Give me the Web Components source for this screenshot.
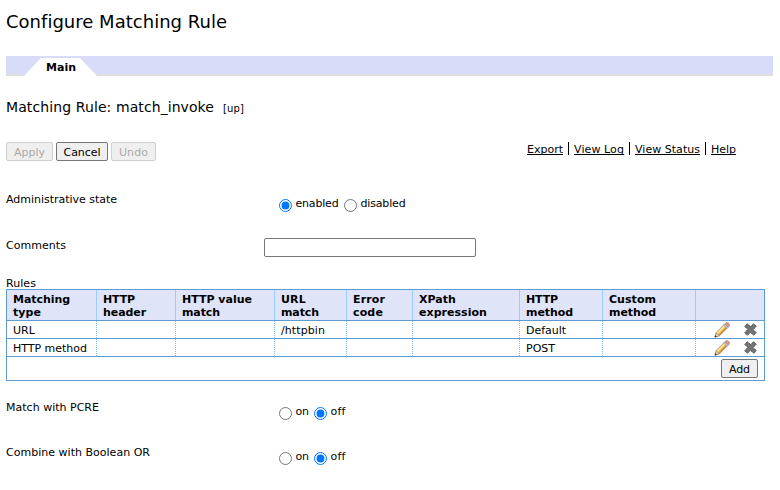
<!DOCTYPE html>
<html lang="en"><head><meta charset="utf-8"><title>Configure Matching Rule</title>
<style>
html,body{margin:0;background:#fff}
body{font:11px/13px "DejaVu Sans",Verdana,sans-serif;color:#000;width:780px;height:490px;overflow:hidden}
</style></head><body>
<config-page></config-page>
<script>
const define=(name,html,setup)=>customElements.define(name,class extends HTMLElement{
  connectedCallback(){
    if(this.shadowRoot)return;
    const root=this.attachShadow({mode:'open'});
    const t=document.createElement('template');
    t.innerHTML=html;
    root.append(t.content.cloneNode(true));
    if(setup)setup(this,root);
  }
});

// A single text line whose tracking is adjusted to a given advance width.
define('text-line','<style>:host{display:inline-block;white-space:pre;flex:none}span{display:inline-block;text-decoration:inherit}</style><span></span>',(el,root)=>{
  const s=root.querySelector('span'),text=el.getAttribute('text'),w=+el.getAttribute('w');
  s.textContent=text;
  if(w){
    const natural=s.getBoundingClientRect().width;
    const gap=(w-natural)/text.length;
    s.style.letterSpacing=gap+'px';
    el.style.width=w+'px';
  }
});

define('tab-bar',`<style>
:host{display:flex;width:767px;height:20px;box-sizing:border-box;background:linear-gradient(#d8dcf9 0 18px,#dedede 18px);padding:2px 0 0 18px}
.tab{width:73px;height:18px;background:#fff;clip-path:polygon(17px 0,56px 0,73px 18px,0 18px);display:flex;padding:3px 0 0 22px;box-sizing:border-box;font-weight:bold}
</style><div class="tab"><slot></slot></div>`);

define('push-button',`<style>
:host{display:block;flex:none}
button{display:flex;align-items:center;justify-content:center;box-sizing:border-box;width:100%;height:19px;margin:0;padding:2px 0 0;border:1px solid #767676;border-radius:2px;background:#efefef;color:#000;font:inherit}
button:disabled{border-color:#d0d0d0;background:#efefef;color:#aaa}
</style><button><slot></slot></button>`,(el,root)=>{root.querySelector('button').disabled=el.hasAttribute('disabled')});

define('link-bar',`<style>
:host{display:flex}
a{display:block;box-sizing:border-box;color:#000;height:13px;padding:1px 0 0 5px;border-left:1px solid #000;margin-right:5px;text-decoration:none}
a:first-of-type{border:0;padding-left:0}
text-line{display:block;border-bottom:1px solid #000;height:11px}
</style><a href="#"><text-line text="Export" w="36"></text-line></a><a href="#"><text-line text="View Log" w="50"></text-line></a><a href="#"><text-line text="View Status" w="65"></text-line></a><a href="#"><text-line text="Help" w="25"></text-line></a>`);

define('form-row',`<style>
:host{display:grid;grid-template-columns:258px auto;align-items:start}
</style><slot name="label"></slot><slot></slot>`);

// Options are given as "text:width" pairs.
define('radio-group',`<style>
:host{display:flex;padding:4px 0 0 15px}
input{width:13px;height:13px;margin:2px 3.5px 0 0;flex:none}
text-line{margin-right:5.5px}
</style>`,(el,root)=>{
  el.getAttribute('options').split(',').forEach((o,i)=>{
    const [text,w]=o.split(':');
    const r=document.createElement('input');r.type='radio';r.name='choice';
    r.checked=i===+el.getAttribute('selected');
    const l=document.createElement('text-line');l.setAttribute('text',text);l.setAttribute('w',w);
    root.append(r,l);
  });
});

define('text-field',`<style>
:host{display:block}
input{display:block;box-sizing:border-box;width:212px;height:19px;border:1px solid #767676;border-radius:2px;margin:0;padding:0;background:#fff}
</style><input type="text">`);

define('edit-icon',`<style>:host,svg{display:block;width:16px;height:16px}</style>
<svg viewBox="0 0 16 16"><path d="M1 15l1.300-4.500L10 2.700l3.300 3.300-7.800 7.800z" fill="#f0c05c" stroke="#a8875c" stroke-width=".9"/><path d="M3.300 11.200l7.800-7.800" stroke="#ffe7a0" stroke-width="1.600"/><path d="M5 13.200l7.800-7.800" stroke="#c48a3c" stroke-width="1.200"/><path d="M1 15l1.200-4 3 2.800z" fill="#ead5bd" stroke="#9a8068" stroke-width=".5"/><path d="M.6 15.400l.7-2.300 1.600 1.600z" fill="#333"/><path d="M9.500 3.200l1.500-1.500 3.400 3.300-1.500 1.500z" fill="#c5c9cd" stroke="#8d8f92" stroke-width=".6"/><path d="M11 1.700l.8-.8q1.200-.7 2.300.2l1 .9q.9 1.100 0 2.200l-.800.900z" fill="#e09a94" stroke="#b3706c" stroke-width=".7"/></svg>`);

define('delete-icon',`<style>:host,svg{display:block;width:13px;height:13px}</style>
<svg viewBox="0 0 13 13"><path d="M3.300.7L6.500 3.600 9.700.7l2.700 2.500-3.200 3.300 3.200 3.300-2.700 2.500-3.200-2.900-3.200 2.900L.6 9.800l3.200-3.300L.6 3.200z" fill="#747474" stroke="#505050" stroke-width="1" stroke-dasharray="1.500 .6"/></svg>`);

define('rules-table',`<style>
:host{display:block;width:759px;box-sizing:border-box;border:1px solid #5f9bd3}
.row{display:grid;grid-template-columns:89px 79px 99px 72px 66px 107px 83px 93px 69px;border-bottom:1px solid #5f9bd3;height:17px}
.row>div{box-sizing:border-box;padding:3px 0 0 6px}
.row>div+div{border-left:1px dotted #7fbdf5;padding-left:6px}
.head{height:30px;background:#e0e4f9;font-weight:bold}
.head>div+div{border-left:1px solid #99ccff}
.head text-line{display:block}
.row>div.tools{display:flex;padding:1px 0 0 18px;gap:14px}
delete-icon{margin-top:1px}
.foot{height:23px;display:flex;justify-content:flex-end;padding:2px 6px 0 0;box-sizing:border-box}
push-button{width:37px}
</style><div id="body"></div><div class="foot"><push-button><text-line text="Add" w="21"></text-line></push-button></div>`,(el,root)=>{
  const line=([t,w])=>`<text-line text="${t}" w="${w}"></text-line>`;
  const heads=[[['Matching',57],['type',28]],[['HTTP',32],['header',43]],[['HTTP value',70],['match',38]],[['URL',25],['match',38]],[['Error',32],['code',30]],[['XPath',37],['expression',68]],[['HTTP',32],['method',47]],[['Custom',47],['method',47]],[]];
  const rows=[[['URL',22],0,0,['/httpbin',44],0,0,['Default',40],0],[['HTTP method',74],0,0,0,0,0,['POST',29],0]];
  root.getElementById('body').innerHTML=
    '<div class="row head">'+heads.map(h=>'<div>'+h.map(line).join('')+'</div>').join('')+'</div>'+
    rows.map(r=>'<div class="row">'+r.map(c=>'<div>'+(c?line(c):'')+'</div>').join('')+'<div class="tools"><edit-icon></edit-icon><delete-icon></delete-icon></div></div>').join('');
});

define('config-page',`<style>
:host{display:flex;flex-direction:column;padding:11px 0 0 6px;box-sizing:border-box;width:780px;height:490px}
:host>*{flex:none}
h1{font-size:18px;line-height:21px;font-weight:normal;height:45px;margin:0}
h2{font-size:14px;line-height:16px;font-weight:normal;height:43px;margin:23px 0 0;display:flex}
h2 small{font-size:10px;line-height:12px;padding:4px 0 0 9px}
.bar{display:flex;gap:3px;height:51px}
link-bar{margin-left:368px}
form-row{height:45px}
</style>
<h1><text-line text="Configure Matching Rule" w="221"></text-line></h1>
<tab-bar><text-line text="Main" w="30"></text-line></tab-bar>
<h2><text-line text="Matching Rule: " w="110"></text-line><text-line text="match_invoke" w="98"></text-line><small><text-line text="[up]" w="21"></text-line></small></h2>
<div class="bar"><push-button disabled style="width:47px"><text-line text="Apply" w="31"></text-line></push-button><push-button style="width:52px"><text-line text="Cancel" w="37"></text-line></push-button><push-button disabled style="width:45px"><text-line text="Undo" w="29"></text-line></push-button><link-bar></link-bar></div>
<form-row style="height:46px"><text-line slot="label" text="Administrative state" w="111"></text-line><radio-group options="enabled:43,disabled:45" selected="0"></radio-group></form-row>
<form-row style="height:38px"><text-line slot="label" text="Comments" w="60"></text-line><text-field style="margin-top:-1px"></text-field></form-row>
<text-line text="Rules" w="30" style="height:12px"></text-line>
<rules-table></rules-table>
<form-row style="margin-top:20px"><text-line slot="label" text="Match with PCRE" w="93"></text-line><radio-group options="on:13,off:15" selected="1"></radio-group></form-row>
<form-row><text-line slot="label" text="Combine with Boolean OR" w="144"></text-line><radio-group options="on:13,off:15" selected="1"></radio-group></form-row>`);
</script></body></html>
